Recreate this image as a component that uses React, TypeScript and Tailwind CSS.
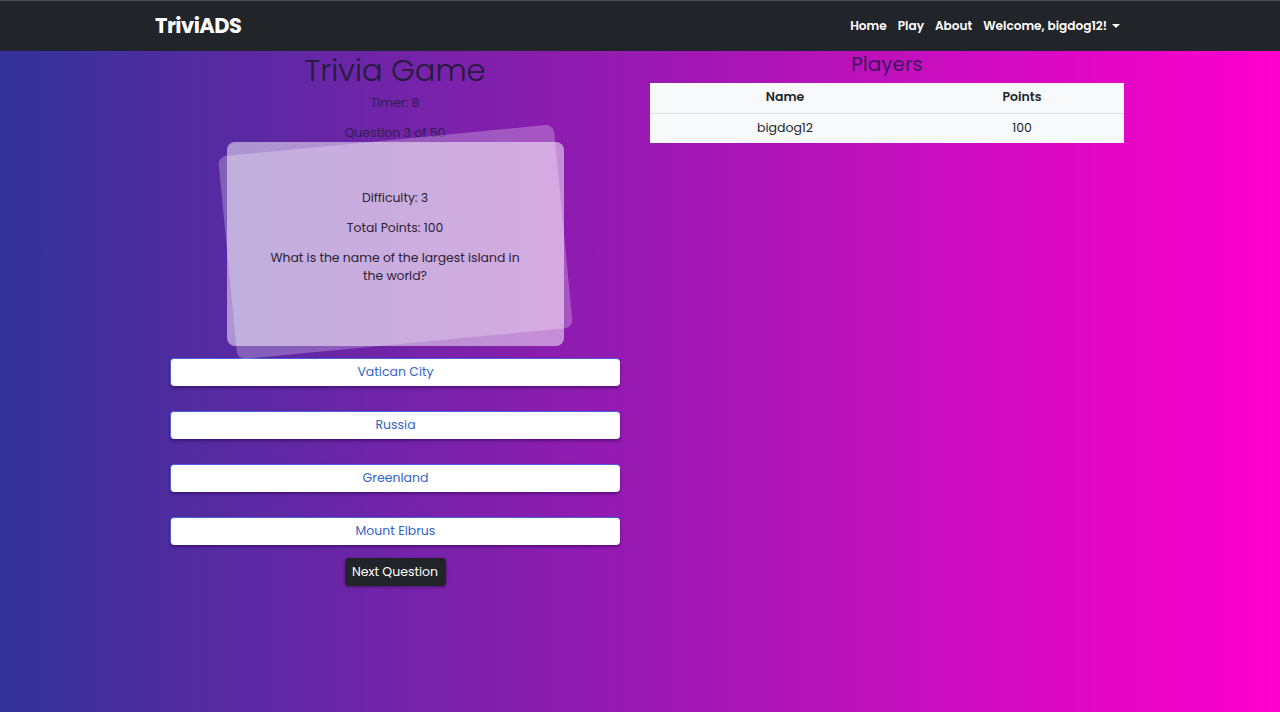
import React from "react";

const answers = ["Vatican City", "Russia", "Greenland", "Mount Elbrus"];

export default function App() {
  return (
    <div className="min-h-screen w-full bg-[linear-gradient(to_right,#333399,#ff00cc)] font-['Poppins','Open_Sans',sans-serif]">
      <nav className="h-[51px] w-full bg-[#212529] border-t border-[#4a4d52]">
        <div className="ml-[155px] flex h-full w-[965px] items-center justify-between">
          <span className="text-[21px] font-bold tracking-tight text-white">TriviADS</span>
          <div className="flex items-center gap-[11px] text-[12.1px] font-semibold text-white">
            <span>Home</span>
            <span>Play</span>
            <span>About</span>
            <span className="flex items-center gap-[5px]">
              Welcome, bigdog12!
              <span className="inline-block h-0 w-0 border-x-[4px] border-t-[4px] border-x-transparent border-t-white" />
            </span>
          </div>
        </div>
      </nav>

      <div className="mx-auto flex w-[968px] gap-[30px] pl-[14px]">
        <div className="flex w-[450px] flex-col items-center">
          <h1 className="mt-[2px] text-[30.5px] font-light leading-[36px] text-[#231b3a]">Trivia Game</h1>
          <p className="mt-[6px] text-[12.5px] leading-[16px] text-[#2a2150]">Timer: 8</p>
          <p className="mt-[14px] text-[12.5px] leading-[16px] text-[#2a2150]">Question 3 of 50</p>

          <div className="relative mt-[1px] h-[204px] w-[337px]">
            <div className="absolute left-[0px] top-[-2px] h-[204px] w-[337px] -rotate-[5.5deg] rounded-lg bg-white/25" />
            <div className="relative flex h-full w-full flex-col items-center justify-center rounded-lg bg-white/50 px-[42px] pb-[14px] text-center text-[12.4px] leading-[18px] text-[#2a2235]">
              <p>Difficulty: 3</p>
              <p className="mt-[12px]">Total Points: 100</p>
              <p className="mt-[12px]">What is the name of the largest island in the world?</p>
            </div>
          </div>

          <div className="mt-[12px] flex w-full flex-col gap-[25px]">
            {answers.map((a) => (
              <div
                key={a}
                className="flex h-[28px] w-full items-center justify-center rounded-[4px] border-t border-l border-[#4b5ee0] bg-white text-[12.5px] text-[#3561c9] shadow-[0_2px_3px_rgba(40,0,80,0.5)]"
              >
                {a}
              </div>
            ))}
          </div>

          <button className="mt-[13px] h-[28px] w-[101px] rounded-[4px] bg-[#212529] text-[12.5px] text-white shadow-[0_1px_3px_rgba(0,0,0,0.4)]">
            Next Question
          </button>
        </div>

        <div className="flex w-[474px] flex-col items-center">
          <h2 className="mt-[0px] text-[20px] leading-[26px] text-[#3f1463]">Players</h2>
          <table className="mt-[6px] w-full bg-[#f8f9fa] text-center text-[12.5px] text-[#212529]">
            <thead>
              <tr className="h-[30px] border-b border-[#dee2e6]">
                <th className="w-[270px] font-semibold">Name</th>
                <th className="font-semibold">Points</th>
              </tr>
            </thead>
            <tbody>
              <tr className="h-[30px]">
                <td>bigdog12</td>
                <td>100</td>
              </tr>
            </tbody>
          </table>
        </div>
      </div>
    </div>
  );
}
